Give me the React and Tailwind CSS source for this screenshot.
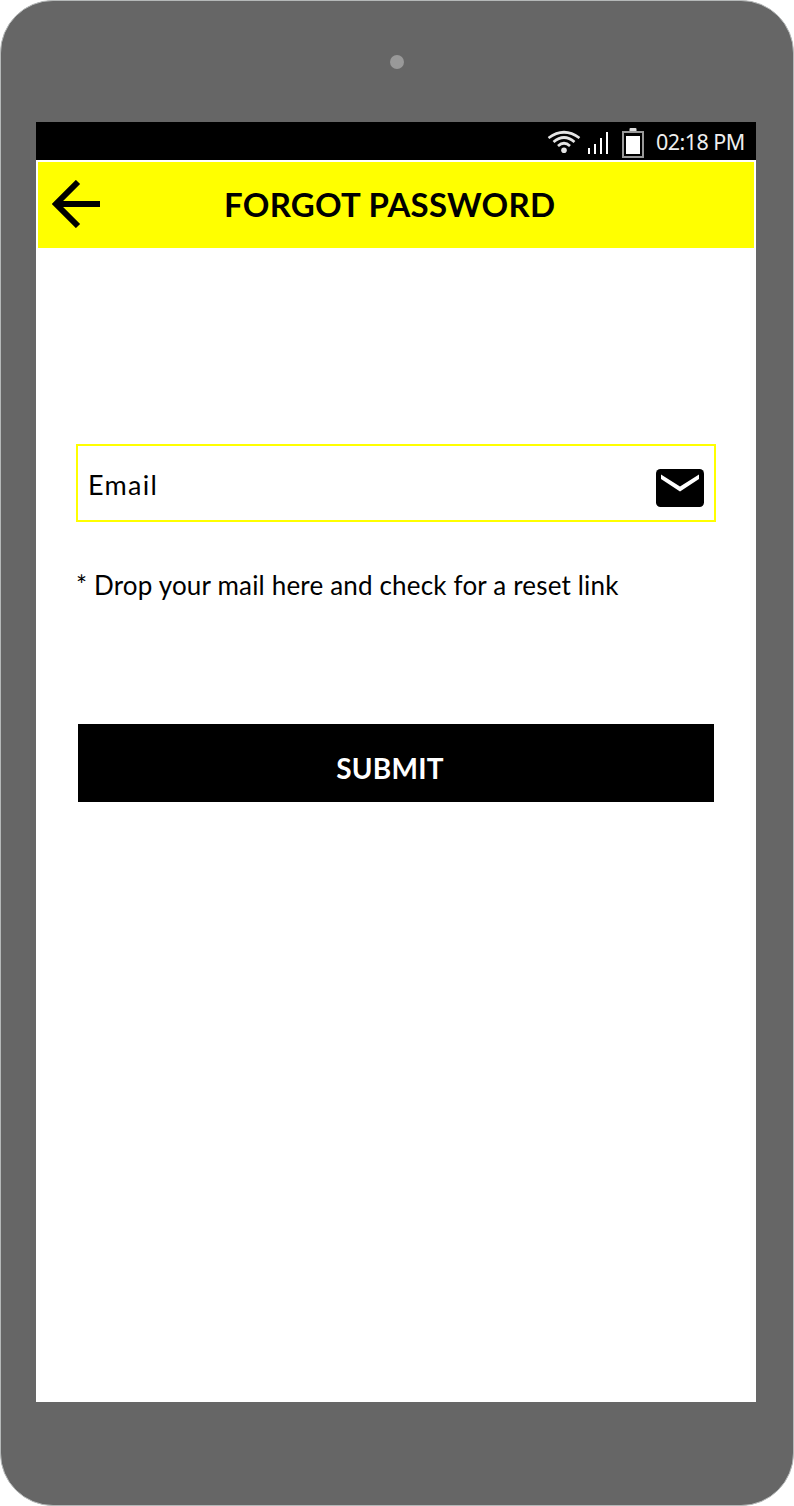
function StatusBar() {
  return (
    <div className="flex h-[38px] shrink-0 items-center bg-black text-white">
      <svg className="ml-[511px] h-[38px] w-[34px] shrink-0" viewBox="0 0 34 38" fill="none" stroke="#e4e4e4" strokeWidth="2.7">
        <path d="M1.5 16Q17 4.500 32.500 16" />
        <path d="M6.500 20Q17 11 27.500 20" />
        <path d="M11 24Q17 18.500 23 24" />
        <circle cx="17" cy="28.300" r="2.800" fill="#e4e4e4" stroke="none" />
      </svg>
      <svg className="ml-[7px] h-[38px] w-[21px] shrink-0" viewBox="0 0 21 38" fill="#fff" shapeRendering="crispEdges">
        <rect x="0" y="26" width="2" height="6" />
        <rect x="6" y="22" width="2" height="10" />
        <rect x="12" y="16" width="2" height="16" />
        <rect x="18" y="10" width="2" height="22" />
      </svg>
      <svg className="ml-[13px] h-[38px] w-[22px] shrink-0" viewBox="0 0 22 38">
        <rect x="7.500" y="6" width="7" height="4" rx="1" fill="#ddd" />
        <rect x="1" y="10" width="20" height="25" fill="#000" stroke="#999" strokeWidth="2" />
        <rect x="4" y="14" width="14" height="18" fill="#fff" />
      </svg>
      <span className="ml-3 mt-[2px] whitespace-nowrap font-['Noto_Sans'] text-[21.500px] leading-none tracking-[-0.55px] text-[#eee]">02:18 PM</span>
    </div>
  );
}

function Header() {
  return (
    <div className="mx-0.5 mt-0.5 flex h-[86px] shrink-0 items-center bg-[#ff0]">
      <svg className="ml-3.5 mb-0.5 h-12 w-12 shrink-0" viewBox="0 0 48 48" fill="none" stroke="#000" strokeWidth="6">
        <path d="M26 2L4 24L26 46M5 24H48" />
      </svg>
      <h1 className="mb-0.5 ml-[124px] whitespace-nowrap font-['Lato'] text-[33px] font-bold leading-none tracking-[0.250px]">FORGOT PASSWORD</h1>
    </div>
  );
}

export default function App() {
  return (
    <div className="h-[1506px] w-[794px] bg-white">
      <div className="flex h-[1505.500px] w-[794px] flex-col items-center rounded-[53px] border border-[#b5b8b8] bg-[#666]">
        <div className="mt-[54px] h-3.5 w-3.5 shrink-0 rounded-full bg-[#999]" />
        <div className="ml-[35px] mt-[53px] flex h-[1280px] w-[720px] shrink-0 flex-col self-start bg-white text-black">
          <StatusBar />
          <Header />
          <div className="mx-10 mt-[196px] flex h-[78px] shrink-0 items-center justify-between border-2 border-[#ff0] pl-2.5 pr-2.5">
            <span className="mt-0.5 font-['Lato'] text-[27px] leading-none tracking-[1.300px]">Email</span>
            <svg className="mt-[10px] h-[38px] w-12" viewBox="0 0 48 38">
              <rect width="48" height="38" rx="4.500" />
              <path d="M5 5.500L24 17.500L43 5.500V10L24 22.500L5 10Z" fill="#fff" />
            </svg>
          </div>
          <p className="ml-10 mt-[49px] h-8 shrink-0 whitespace-nowrap font-['Lato'] text-[26px] leading-[28px] tracking-[0.180px]">* Drop your mail here and check for a reset link</p>
          <button className="mx-[42px] mt-[121px] h-[78px] shrink-0 bg-black pr-3 pt-2.5 font-['Lato'] text-[28px] font-bold leading-none tracking-[0.200px] text-white">SUBMIT</button>
        </div>
      </div>
    </div>
  );
}
